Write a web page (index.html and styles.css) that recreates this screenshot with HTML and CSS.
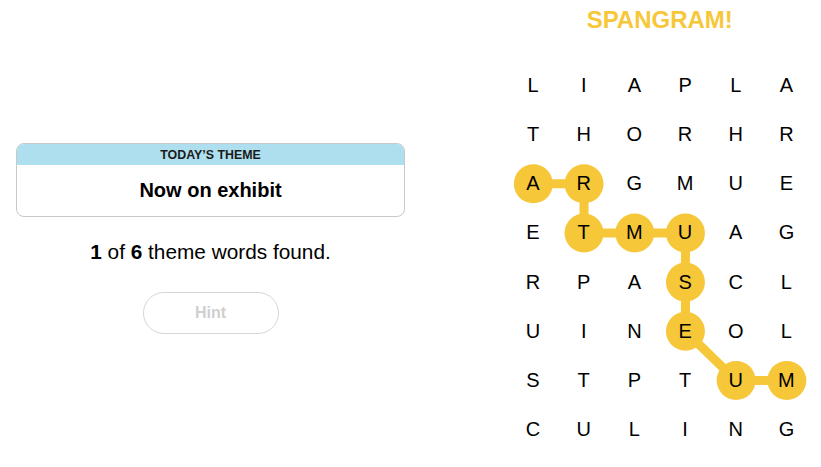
FILE: index.html
```html
<!DOCTYPE html>
<html lang="en">
<head>
<meta charset="utf-8">
<title>Strands</title>
<link rel="stylesheet" href="styles.css">
</head>
<body>
<main class="game">
  <section class="info">
    <div class="theme-card">
      <div class="theme-head">TODAY’S THEME</div>
      <div class="theme-body">Now on exhibit</div>
    </div>
    <p class="found"><b>1</b> of <b>6</b> theme words found.</p>
    <button class="hint" type="button" disabled>Hint</button>
  </section>
  <section class="board">
    <h1 class="status">SPANGRAM!</h1>
    <div class="grid">
      <svg class="paths" viewBox="0 0 304.2 393.12" width="304.2" height="393.12" aria-hidden="true">
        <polyline points="25.35,122.85 76.05,122.85 76.05,171.99 126.75,171.99 177.45,171.99 177.45,221.13 177.45,270.27 228.15,319.41 278.85,319.41" fill="none" stroke="#f7c73a" stroke-width="9" stroke-linejoin="round"/>
        <g fill="#f7c73a">
          <circle cx="25.35" cy="122.85" r="19.5"/>
          <circle cx="76.05" cy="122.85" r="19.5"/>
          <circle cx="76.05" cy="171.99" r="19.5"/>
          <circle cx="126.75" cy="171.99" r="19.5"/>
          <circle cx="177.45" cy="171.99" r="19.5"/>
          <circle cx="177.45" cy="221.13" r="19.5"/>
          <circle cx="177.45" cy="270.27" r="19.5"/>
          <circle cx="228.15" cy="319.41" r="19.5"/>
          <circle cx="278.85" cy="319.41" r="19.5"/>
        </g>
      </svg>
      <span class="cell">L</span><span class="cell">I</span><span class="cell">A</span><span class="cell">P</span><span class="cell">L</span><span class="cell">A</span>
      <span class="cell">T</span><span class="cell">H</span><span class="cell">O</span><span class="cell">R</span><span class="cell">H</span><span class="cell">R</span>
      <span class="cell">A</span><span class="cell">R</span><span class="cell">G</span><span class="cell">M</span><span class="cell">U</span><span class="cell">E</span>
      <span class="cell">E</span><span class="cell">T</span><span class="cell">M</span><span class="cell">U</span><span class="cell">A</span><span class="cell">G</span>
      <span class="cell">R</span><span class="cell">P</span><span class="cell">A</span><span class="cell">S</span><span class="cell">C</span><span class="cell">L</span>
      <span class="cell">U</span><span class="cell">I</span><span class="cell">N</span><span class="cell">E</span><span class="cell">O</span><span class="cell">L</span>
      <span class="cell">S</span><span class="cell">T</span><span class="cell">P</span><span class="cell">T</span><span class="cell">U</span><span class="cell">M</span>
      <span class="cell">C</span><span class="cell">U</span><span class="cell">L</span><span class="cell">I</span><span class="cell">N</span><span class="cell">G</span>
    </div>
  </section>
</main>
</body>
</html>
```

FILE: styles.css
```css
* { box-sizing: border-box; }

html, body {
  margin: 0;
  padding: 0;
  background: #ffffff;
}

body {
  font-family: "Liberation Sans", Arial, sans-serif;
  color: #000000;
  width: 821px;
  height: 467px;
  overflow: hidden;
}

.game {
  display: grid;
  grid-template-columns: 421px 1fr;
}

.info {
  display: flex;
  flex-direction: column;
  align-items: center;
  padding: 143px 16px 0 16px;
}

.theme-card {
  width: 389px;
  border: 1px solid #c8c8c8;
  border-radius: 8px;
  overflow: hidden;
  text-align: center;
}

.theme-head {
  background: #aedfee;
  height: 21px;
  line-height: 22px;
  font-size: 12.4px;
  font-weight: 700;
  color: #1a1a1a;
}

.theme-body {
  height: 51px;
  line-height: 50px;
  font-size: 20px;
  font-weight: 700;
}

.found {
  margin: 23px 0 0 0;
  font-size: 20.8px;
  line-height: 24px;
  text-align: center;
}

.hint {
  margin-top: 28px;
  width: 136px;
  height: 42px;
  border: 1px solid #d6d6d6;
  border-radius: 21px;
  background: #ffffff;
  color: #cfcfcf;
  font-family: "Liberation Sans", Arial, sans-serif;
  font-size: 16px;
  font-weight: 700;
}

.board {
  padding: 6px 0 0 86.65px;
}

.status {
  margin: 0 0 27px 0;
  width: 304.2px;
  font-size: 24px;
  line-height: 28px;
  font-weight: 700;
  text-align: center;
  color: #f7c73a;
}

.grid {
  position: relative;
  display: grid;
  grid-template-columns: repeat(6, 50.7px);
  grid-template-rows: repeat(8, 49.14px);
}

.paths {
  position: absolute;
  left: 0;
  top: 0;
}

.cell {
  position: relative;
  display: flex;
  align-items: center;
  justify-content: center;
  font-size: 20px;
  color: #000000;
}
```
